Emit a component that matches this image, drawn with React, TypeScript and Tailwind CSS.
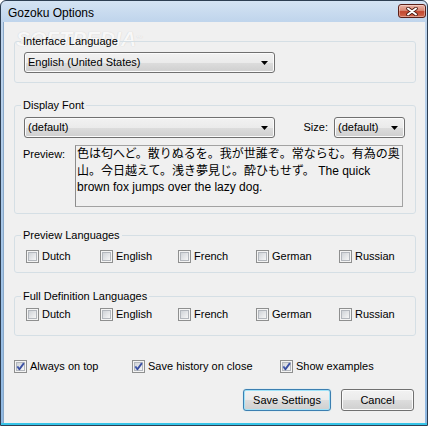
import React from "react";

function Box({ checked }: { checked?: boolean }) {
  return (
    <svg width="13" height="13" viewBox="0 0 13 13" className="shrink-0">
      <defs>
        <linearGradient id="cbfill" x1="0" y1="0" x2="1" y2="1">
          <stop offset="0" stopColor="#cdd1d6" />
          <stop offset="1" stopColor="#f8f8f8" />
        </linearGradient>
        <linearGradient id="cbcheck" x1="0" y1="0" x2="1" y2="1">
          <stop offset="0" stopColor="#5a74c4" />
          <stop offset="1" stopColor="#23358a" />
        </linearGradient>
      </defs>
      <rect x="0.5" y="0.5" width="12" height="12" fill="#f4f4f4" stroke="#8e8f8f" />
      <rect x="2.5" y="2.5" width="8" height="8" fill="url(#cbfill)" stroke="#b3b7bd" strokeWidth="1" />
      {checked && (
        <path d="M3.3 6.4 L5.4 9.2 L9.9 3.1" fill="none" stroke="url(#cbcheck)" strokeWidth="1.9" strokeLinejoin="round" />
      )}
    </svg>
  );
}

function Check({ label, checked, w }: { label: string; checked?: boolean; w?: string }) {
  return (
    <div className={`flex h-[15px] items-center ${w ?? ""}`}>
      <Box checked={checked} />
      <span className="ml-[3px] text-[11px] leading-[13px]">{label}</span>
    </div>
  );
}

function Arrow() {
  return (
    <svg width="7" height="4" viewBox="0 0 7 4" className="shrink-0">
      <polygon points="0,0 7,0 3.5,4" fill="#000" />
    </svg>
  );
}

function Select({ text, w }: { text: string; w: string }) {
  return (
    <div
      className={`flex h-[21px] ${w} items-center justify-between rounded-[3px] border border-[#707070] bg-[linear-gradient(to_bottom,#f2f2f2_0%,#ebebeb_50%,#dddddd_50%,#cfcfcf_100%)] pl-[3px] pr-[6px] shadow-[inset_0_0_0_1px_#fbfbfb]`}
    >
      <span className="text-[11px] leading-[13px]">{text}</span>
      <Arrow />
    </div>
  );
}

const langW = ["w-[74px]", "w-[78px]", "w-[78px]", "w-[83px]", ""];
const langs = ["Dutch", "English", "French", "German", "Russian"];

export default function App() {
  return (
    <div className="relative flex h-[426px] w-[428px] flex-col overflow-hidden rounded-t-[6px] border border-[#2d3e52] bg-[linear-gradient(to_bottom,#d4e3f3,#c0d5ec_20px,#8fb8e2)] text-black [font-family:'Liberation_Sans',Arial,sans-serif]">
      {/* title bar */}
      <div className="flex h-[21px] shrink-0 items-start justify-between pl-[7px] pr-[1px]">
        <span className="mt-[5px] text-[12px] leading-[14px]">Gozoku Options</span>
        <div className="mt-[3px] flex h-[14px] w-[28px] items-center justify-center rounded-[3px] border border-[#5b1f17] bg-[linear-gradient(to_bottom,#eab3a6_0%,#d98a76_45%,#c2472f_55%,#d26a4f_100%)] shadow-[inset_0_0_0_1px_rgba(255,255,255,0.35)]">
          <svg width="12" height="9" viewBox="0 0 12 9">
            <path d="M2 1.5 L10 7.5 M10 1.5 L2 7.5" stroke="#4a1a12" strokeWidth="3.6" strokeLinecap="round" />
            <path d="M2 1.5 L10 7.5 M10 1.5 L2 7.5" stroke="#fff" strokeWidth="2" strokeLinecap="round" />
          </svg>
        </div>
      </div>

      {/* content */}
      <div className="relative ml-[2px] mr-[2px] flex flex-1 flex-col border-l border-[#8aa9c9] bg-[#f0f0f0] pl-[10px] pr-[9px] pt-[13px]">
        {/* watermark */}
        <div className="pointer-events-none absolute left-[12px] top-[6px] text-[21px] font-bold italic leading-[22px] text-[#f8f8f8] [text-shadow:0_0_1px_#c8c8c8]">
          SOFTPEDIA<span className="align-top text-[7px] not-italic">™</span>
        </div>

        <fieldset className="relative rounded-[3px] border border-[#d5dfe5] px-0 pb-[9px] pt-[4px]">
          <legend className="ml-[6px] px-[2px] text-[11px] leading-[13px]">Interface Language</legend>
          <div className="pl-[9px]">
            <Select text="English (United States)" w="w-[251px]" />
          </div>
        </fieldset>

        <fieldset className="mt-[16px] rounded-[3px] border border-[#d5dfe5] pb-[6px] pt-[5px]">
          <legend className="ml-[6px] px-[2px] text-[11px] leading-[13px]">Display Font</legend>
          <div className="flex items-center justify-between pl-[9px] pr-[10px]">
            <Select text="(default)" w="w-[251px]" />
            <div className="flex items-center gap-[6px]">
              <span className="text-[11px] leading-[13px]">Size:</span>
              <Select text="(default)" w="w-[71px]" />
            </div>
          </div>
          <div className="mt-[7px] flex pl-[8px] pr-[10px]">
            <span className="mt-[3px] w-[52px] text-[11px] leading-[13px]">Preview:</span>
            <div className="h-[62px] w-[328px] border border-[#a2a2a2] border-l-[#8c8c8c] bg-[#f0f0f0] pl-[1px] text-[12px] leading-[16.5px] [font-family:'Liberation_Sans','Noto_Sans_CJK_JP',sans-serif]">
              <div className="whitespace-nowrap">色は匂へど。散りぬるを。我が世誰ぞ。常ならむ。有為の奥</div>
              <div className="whitespace-nowrap">山。今日越えて。浅き夢見じ。酔ひもせず。 The quick</div>
              <div className="whitespace-nowrap">brown fox jumps over the lazy dog.</div>
            </div>
          </div>
        </fieldset>

        <fieldset className="mt-[15px] rounded-[3px] border border-[#d5dfe5] pb-[8px] pt-[7px]">
          <legend className="ml-[6px] px-[2px] text-[11px] leading-[13px]">Preview Languages</legend>
          <div className="flex pl-[11px]">
            {langs.map((l, i) => (
              <Check key={l} label={l} w={langW[i]} />
            ))}
          </div>
        </fieldset>

        <fieldset className="mt-[17px] rounded-[3px] border border-[#d5dfe5] pb-[13px] pt-[4px]">
          <legend className="ml-[6px] px-[2px] text-[11px] leading-[13px]">Full Definition Languages</legend>
          <div className="flex pl-[11px]">
            {langs.map((l, i) => (
              <Check key={l} label={l} w={langW[i]} />
            ))}
          </div>
        </fieldset>

        <div className="mt-[23px] flex">
          <Check label="Always on top" checked w="w-[118px]" />
          <Check label="Save history on close" checked w="w-[148px]" />
          <Check label="Show examples" checked />
        </div>

        <div className="mt-[15px] flex justify-end gap-[10px] pr-[2px]">
          <button className="h-[22px] w-[88px] rounded-[3px] border border-[#3c7fb1] bg-[linear-gradient(to_bottom,#f2f2f2_0%,#ebebeb_50%,#dddddd_50%,#cfcfcf_100%)] text-[11px] leading-[13px] shadow-[inset_0_0_0_1px_#9fe2f8,0_0_1px_#7fd0ef]">
            Save Settings
          </button>
          <button className="h-[22px] w-[73px] rounded-[3px] border border-[#707070] bg-[linear-gradient(to_bottom,#f2f2f2_0%,#ebebeb_50%,#dddddd_50%,#cfcfcf_100%)] text-[11px] leading-[13px] shadow-[inset_0_0_0_1px_#fbfbfb]">
            Cancel
          </button>
        </div>
      </div>
      <div className="h-[2px] shrink-0 bg-[#36c4e8]" />
    </div>
  );
}
